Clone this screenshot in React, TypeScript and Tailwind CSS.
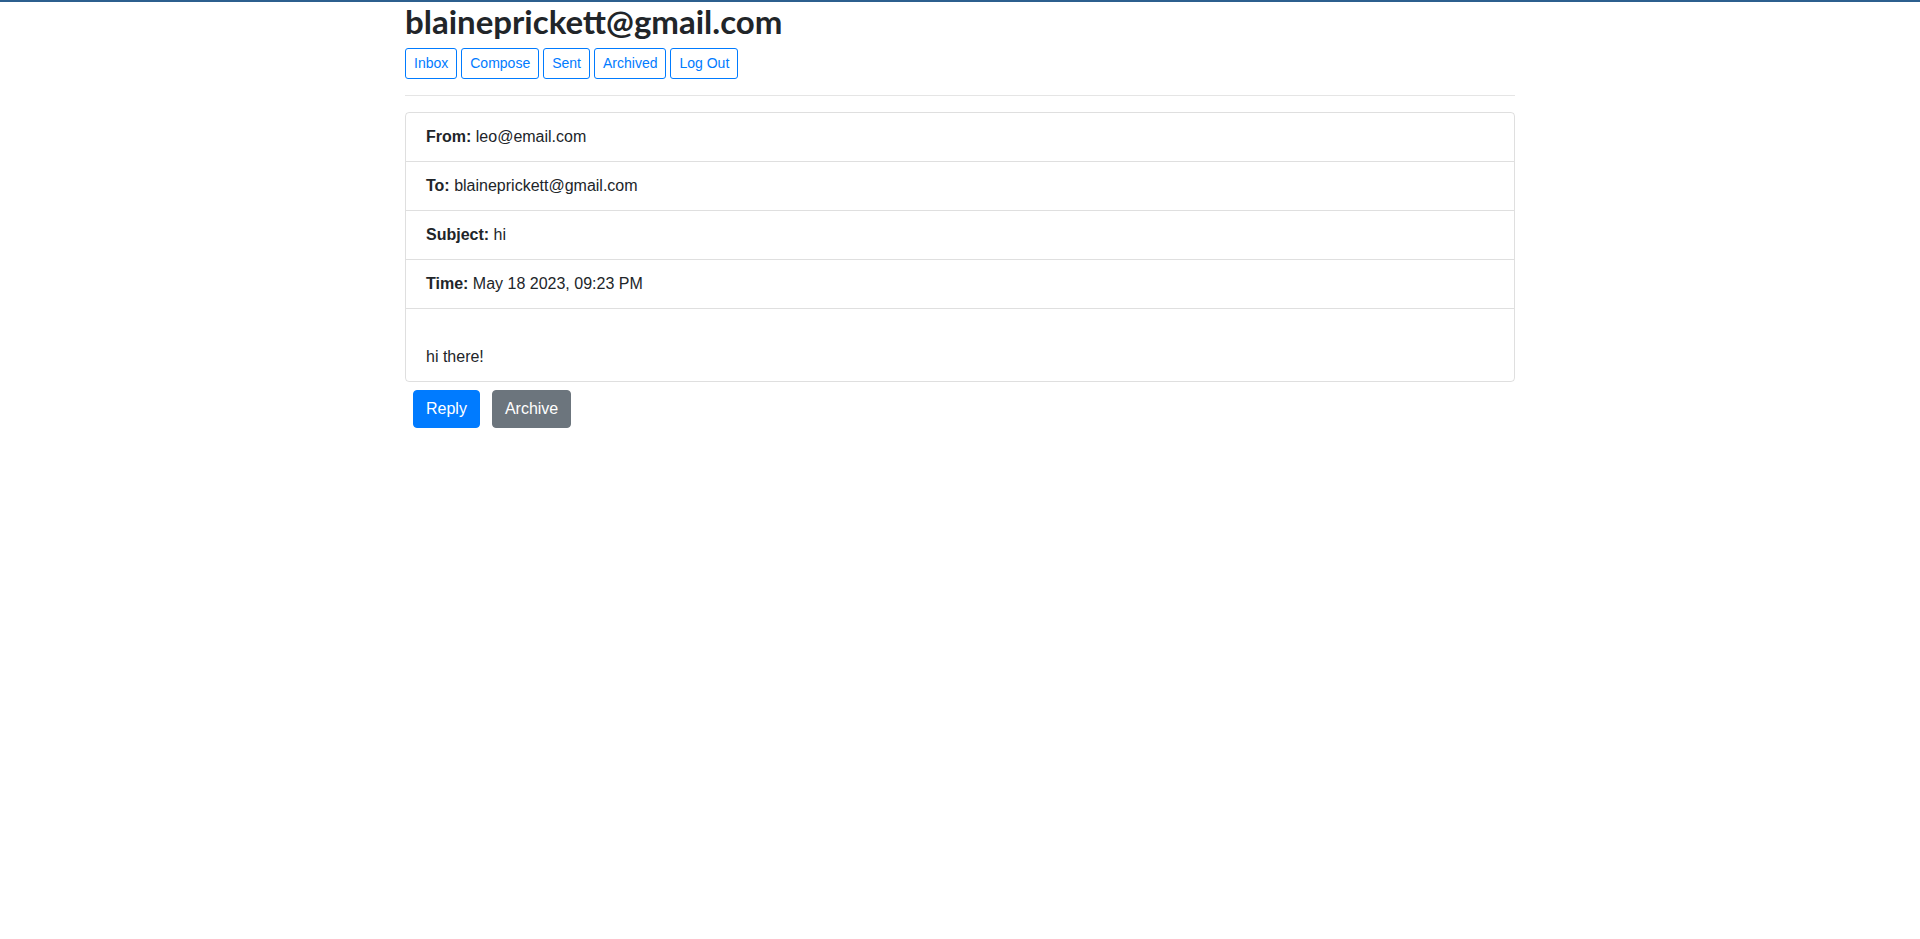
import React from "react";

const font = { fontFamily: '"Liberation Sans", "Noto Sans", sans-serif' };
const headFont = { fontFamily: 'Lato, "Liberation Sans", sans-serif' };

export default function App() {
  const navs = ["Inbox", "Compose", "Sent", "Archived", "Log Out"];
  const rows: [string, string][] = [
    ["From:", "leo@email.com"],
    ["To:", "blaineprickett@gmail.com"],
    ["Subject:", "hi"],
    ["Time:", "May 18 2023, 09:23 PM"],
  ];
  return (
    <div className="min-h-[939px] bg-white text-[#212529] text-[16px] leading-[1.5]" style={font}>
      <div className="h-[2px] bg-[#2c5f8e]" />
      <div className="mx-auto w-[1140px] px-[15px]">
        <h2 className="m-0 mb-2 h-[38px] text-[33px] font-bold leading-[38px]" style={headFont}>
          blaineprickett@gmail.com
        </h2>
        <div className="flex gap-[4px]">
          {navs.map((n) => (
            <button
              key={n}
              className="rounded-[3px] border border-[#007bff] bg-white px-[8px] py-[4px] text-[14px] leading-[1.5] text-[#007bff]"
            >
              {n}
            </button>
          ))}
        </div>
        <hr className="my-4 border-0 border-t border-[rgba(0,0,0,0.1)]" />
        <div className="rounded-[4px] border border-[rgba(0,0,0,0.125)]">
          {rows.map(([k, v]) => (
            <div key={k} className="border-b border-[rgba(0,0,0,0.125)] px-5 py-3">
              <b className="font-bold">{k}</b> {v}
            </div>
          ))}
          <div className="px-5 py-3">
            <div className="h-6" />
            <div>hi there!</div>
          </div>
        </div>
        <div className="mt-[8px] flex gap-3 pl-2">
          <button className="rounded-[4px] border border-[#007bff] bg-[#007bff] px-3 py-[6px] text-[16px] leading-[1.5] text-white">
            Reply
          </button>
          <button className="rounded-[4px] border border-[#6c757d] bg-[#6c757d] px-3 py-[6px] text-[16px] leading-[1.5] text-white">
            Archive
          </button>
        </div>
      </div>
    </div>
  );
}
